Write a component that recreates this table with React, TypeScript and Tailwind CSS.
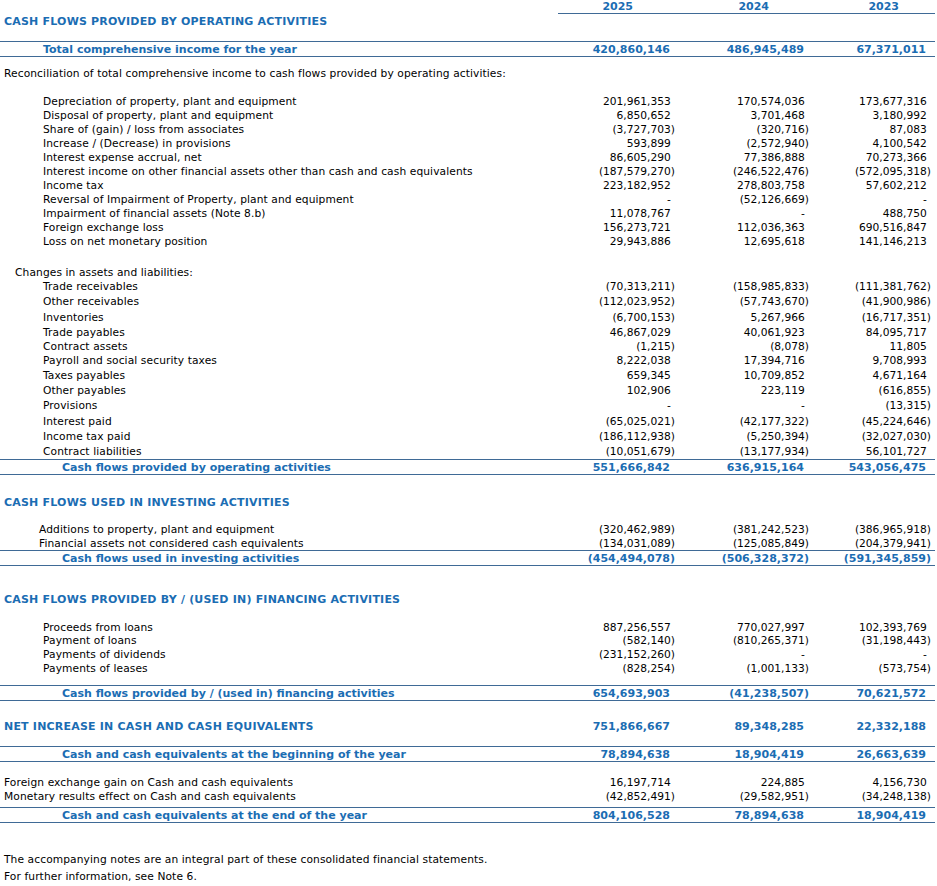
import type { ReactNode } from 'react';

type Vals = [string, string, string];

const BLUE = 'text-[#1b6db3]';

function Num({ v }: { v: string }) {
  // accounting format: negatives hang their closing paren past the digits
  const neg = v.startsWith('(');
  return (
    <span className="whitespace-pre">
      {v}
      {!neg && <span className="invisible">)</span>}
    </span>
  );
}

function Cells({ vals }: { vals: Vals }) {
  return (
    <>
      <div className="text-right pr-[5px]"><Num v={vals[0]} /></div>
      <div className="text-right pr-[3px]"><Num v={vals[1]} /></div>
      <div className="text-right pr-[4px]"><Num v={vals[2]} /></div>
    </>
  );
}

function Line({ label, vals, pl, h }: { label: string; vals: Vals; pl: string; h: string }) {
  return (
    <div className={`grid grid-cols-[558px_122px_132px_123px] items-center pt-[1px] ${h}`}>
      <div className={`${pl} whitespace-nowrap tracking-[0.1px]`}>{label}</div>
      <Cells vals={vals} />
    </div>
  );
}

function Total({ label, vals, pl = 'pl-[62px]' }: { label: string; vals: Vals; pl?: string }) {
  return (
    <div className={`grid grid-cols-[558px_122px_132px_123px] items-center h-[16px] border-y border-[#3f6a96] font-bold text-[11px] ${BLUE}`}>
      <div className={`${pl} whitespace-nowrap`}>{label}</div>
      <Cells vals={vals} />
    </div>
  );
}

function Heading({ children, h = 'h-[14px]' }: { children: ReactNode; h?: string }) {
  return (
    <div className={`pl-[4px] flex items-center font-bold text-[11px] tracking-[0.2px] ${BLUE} ${h}`}>
      {children}
    </div>
  );
}

const adjustments: [string, Vals][] = [
  ['Depreciation of property, plant and equipment', ['201,961,353', '170,574,036', '173,677,316']],
  ['Disposal of property, plant and equipment', ['6,850,652', '3,701,468', '3,180,992']],
  ['Share of (gain) / loss from associates', ['(3,727,703)', '(320,716)', '87,083']],
  ['Increase / (Decrease) in provisions', ['593,899', '(2,572,940)', '4,100,542']],
  ['Interest expense accrual, net', ['86,605,290', '77,386,888', '70,273,366']],
  ['Interest income on other financial assets other than cash and cash equivalents', ['(187,579,270)', '(246,522,476)', '(572,095,318)']],
  ['Income tax', ['223,182,952', '278,803,758', '57,602,212']],
  ['Reversal of Impairment of Property, plant and equipment', ['-', '(52,126,669)', '-']],
  ['Impairment of financial assets (Note 8.b)', ['11,078,767', '-', '488,750']],
  ['Foreign exchange loss', ['156,273,721', '112,036,363', '690,516,847']],
  ['Loss on net monetary position', ['29,943,886', '12,695,618', '141,146,213']],
];

const changes: [string, Vals, string][] = [
  ['Trade receivables', ['(70,313,211)', '(158,985,833)', '(111,381,762)'], 'h-[14px]'],
  ['Other receivables', ['(112,023,952)', '(57,743,670)', '(41,900,986)'], 'h-[16px]'],
  ['Inventories', ['(6,700,153)', '5,267,966', '(16,717,351)'], 'h-[15px]'],
  ['Trade payables', ['46,867,029', '40,061,923', '84,095,717'], 'h-[15px]'],
  ['Contract assets', ['(1,215)', '(8,078)', '11,805'], 'h-[13px]'],
  ['Payroll and social security taxes', ['8,222,038', '17,394,716', '9,708,993'], 'h-[15px]'],
  ['Taxes payables', ['659,345', '10,709,852', '4,671,164'], 'h-[16px]'],
  ['Other payables', ['102,906', '223,119', '(616,855)'], 'h-[14px]'],
  ['Provisions', ['-', '-', '(13,315)'], 'h-[16px]'],
  ['Interest paid', ['(65,025,021)', '(42,177,322)', '(45,224,646)'], 'h-[15px]'],
  ['Income tax paid', ['(186,112,938)', '(5,250,394)', '(32,027,030)'], 'h-[15px]'],
  ['Contract liabilities', ['(10,051,679)', '(13,177,934)', '56,101,727'], 'h-[15px]'],
];

const financing: [string, Vals, string][] = [
  ['Proceeds from loans', ['887,256,557', '770,027,997', '102,393,769'], 'h-[13px]'],
  ['Payment of loans', ['(582,140)', '(810,265,371)', '(31,198,443)'], 'h-[13px]'],
  ['Payments of dividends', ['(231,152,260)', '-', '-'], 'h-[15px]'],
  ['Payments of leases', ['(828,254)', '(1,001,133)', '(573,754)'], 'h-[14px]'],
];

export default function App() {
  return (
    <div className="w-[935px] bg-white text-black text-[10.67px] leading-none font-['DejaVu_Sans',Verdana,sans-serif]">
      {/* year header */}
      <div className="grid grid-cols-[558px_122px_132px_123px] h-[14px]">
        <div />
        <div className={`col-span-3 grid grid-cols-[122px_132px_123px] items-center border-b border-[#3f6a96] font-bold text-[11px] ${BLUE}`}>
          <div className="text-right pr-[47px]">2025</div>
          <div className="text-right pr-[43px]">2024</div>
          <div className="text-right pr-[36px]">2023</div>
        </div>
      </div>

      {/* operating */}
      <Heading>CASH FLOWS PROVIDED BY OPERATING ACTIVITIES</Heading>
      <div className="h-[13px]" />
      <Total label="Total comprehensive income for the year" vals={['420,860,146', '486,945,489', '67,371,011']} pl="pl-[43px]" />
      <div className="h-[10px]" />
      <div className="h-[14px] flex items-center pt-[1px] pl-[4px] tracking-[0.1px]">
        Reconciliation of total comprehensive income to cash flows provided by operating activities:
      </div>
      <div className="h-[14px]" />
      {adjustments.map(([label, vals]) => (
        <Line key={label} label={label} vals={vals} pl="pl-[43px]" h="h-[14px]" />
      ))}
      <div className="h-[17px]" />
      <div className="h-[14px] flex items-center pt-[1px] pl-[15px] tracking-[0.1px]">Changes in assets and liabilities:</div>
      {changes.map(([label, vals, h]) => (
        <Line key={label} label={label} vals={vals} pl="pl-[43px]" h={h} />
      ))}
      <Total label="Cash flows provided by operating activities" vals={['551,666,842', '636,915,164', '543,056,475']} />

      {/* investing */}
      <div className="h-[20px]" />
      <Heading>CASH FLOWS USED IN INVESTING ACTIVITIES</Heading>
      <div className="h-[14px]" />
      <Line label="Additions to property, plant and equipment" vals={['(320,462,989)', '(381,242,523)', '(386,965,918)']} pl="pl-[39px]" h="h-[14px]" />
      <Line label="Financial assets not considered cash equivalents" vals={['(134,031,089)', '(125,085,849)', '(204,379,941)']} pl="pl-[39px]" h="h-[13px]" />
      <Total label="Cash flows used in investing activities" vals={['(454,494,078)', '(506,328,372)', '(591,345,859)']} />

      {/* financing */}
      <div className="h-[26px]" />
      <Heading>CASH FLOWS PROVIDED BY / (USED IN) FINANCING ACTIVITIES</Heading>
      <div className="h-[15px]" />
      {financing.map(([label, vals, h]) => (
        <Line key={label} label={label} vals={vals} pl="pl-[43px]" h={h} />
      ))}
      <div className="h-[9px]" />
      <Total label="Cash flows provided by / (used in) financing activities" vals={['654,693,903', '(41,238,507)', '70,621,572']} />

      {/* net change */}
      <div className="h-[18px]" />
      <div className={`grid grid-cols-[558px_122px_132px_123px] items-center h-[14px] font-bold text-[11px] ${BLUE}`}>
        <div className="pl-[4px] whitespace-nowrap tracking-[0.2px]">NET INCREASE IN CASH AND CASH EQUIVALENTS</div>
        <Cells vals={['751,866,667', '89,348,285', '22,332,188']} />
      </div>
      <div className="h-[13px]" />
      <Total label="Cash and cash equivalents at the beginning of the year" vals={['78,894,638', '18,904,419', '26,663,639']} />
      <div className="h-[14px]" />
      <Line label="Foreign exchange gain on Cash and cash equivalents" vals={['16,197,714', '224,885', '4,156,730']} pl="pl-[4px]" h="h-[14px]" />
      <Line label="Monetary results effect on Cash and cash equivalents" vals={['(42,852,491)', '(29,582,951)', '(34,248,138)']} pl="pl-[4px]" h="h-[14px]" />
      <div className="h-[3px]" />
      <Total label="Cash and cash equivalents at the end of the year" vals={['804,106,528', '78,894,638', '18,904,419']} />

      <div className="h-[30px]" />
      <div className="h-[14px] flex items-center pl-[4px] tracking-[0.1px]">
        The accompanying notes are an integral part of these consolidated financial statements.
      </div>
      <div className="h-[3px]" />
      <div className="h-[14px] flex items-center pl-[4px] tracking-[0.1px]">For further information, see Note 6.</div>
    </div>
  );
}
